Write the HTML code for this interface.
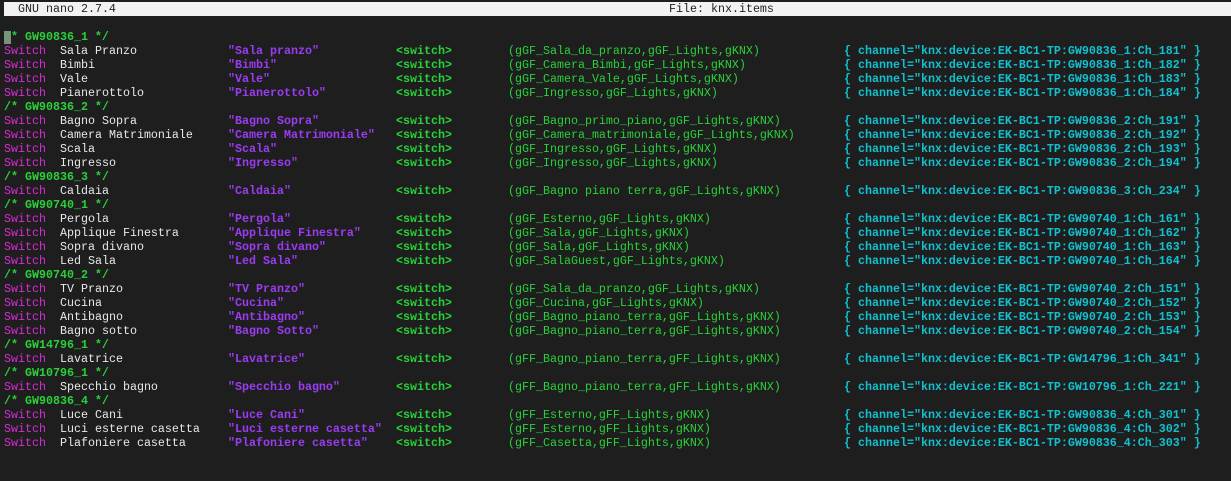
<!DOCTYPE html>
<html><head><meta charset="utf-8"><style>
html,body{margin:0;padding:0;background:#1e1e1e;width:1231px;height:481px;overflow:hidden}
body{font-family:"Liberation Mono","DejaVu Sans Mono",monospace;font-size:11.67px;position:relative}
.hdr{position:absolute;left:4px;top:2px;width:1227px;height:14px;background:#f2f2f2;color:#222}
.hdr span{position:absolute;top:0;line-height:14px;white-space:pre}
.l{position:absolute;left:0;height:14px;line-height:14px;width:1231px;white-space:pre}
.l span{position:absolute;top:0}
.c{color:#2ad13a;font-weight:bold;left:4px}
.s{color:#d92bd6;left:4px}
.n{color:#e8e8e8;left:60px}
.q{color:#9b3cf2;font-weight:bold;left:228px}
.w{color:#2ad13a;font-weight:bold;left:396px}
.g{color:#2ad13a;left:508px}
.h{color:#12c0d0;font-weight:bold;left:844px}
.cur{position:absolute;left:4px;top:31px;width:7px;height:13px;background:#888}
</style></head><body>
<div class="hdr"><span style="left:14px">GNU nano 2.7.4</span><span style="left:665px">File: knx.items</span></div>
<div class="cur"></div>
<div class="l" style="top:30px"><span class="c">/* GW90836_1 */</span></div>
<div class="l" style="top:44px"><span class="s">Switch</span><span class="n">Sala Pranzo</span><span class="q">"Sala pranzo"</span><span class="w">&lt;switch&gt;</span><span class="g">(gGF_Sala_da_pranzo,gGF_Lights,gKNX)</span><span class="h">{ channel="knx:device:EK-BC1-TP:GW90836_1:Ch_181" }</span></div>
<div class="l" style="top:58px"><span class="s">Switch</span><span class="n">Bimbi</span><span class="q">"Bimbi"</span><span class="w">&lt;switch&gt;</span><span class="g">(gGF_Camera_Bimbi,gGF_Lights,gKNX)</span><span class="h">{ channel="knx:device:EK-BC1-TP:GW90836_1:Ch_182" }</span></div>
<div class="l" style="top:72px"><span class="s">Switch</span><span class="n">Vale</span><span class="q">"Vale"</span><span class="w">&lt;switch&gt;</span><span class="g">(gGF_Camera_Vale,gGF_Lights,gKNX)</span><span class="h">{ channel="knx:device:EK-BC1-TP:GW90836_1:Ch_183" }</span></div>
<div class="l" style="top:86px"><span class="s">Switch</span><span class="n">Pianerottolo</span><span class="q">"Pianerottolo"</span><span class="w">&lt;switch&gt;</span><span class="g">(gGF_Ingresso,gGF_Lights,gKNX)</span><span class="h">{ channel="knx:device:EK-BC1-TP:GW90836_1:Ch_184" }</span></div>
<div class="l" style="top:100px"><span class="c">/* GW90836_2 */</span></div>
<div class="l" style="top:114px"><span class="s">Switch</span><span class="n">Bagno Sopra</span><span class="q">"Bagno Sopra"</span><span class="w">&lt;switch&gt;</span><span class="g">(gGF_Bagno_primo_piano,gGF_Lights,gKNX)</span><span class="h">{ channel="knx:device:EK-BC1-TP:GW90836_2:Ch_191" }</span></div>
<div class="l" style="top:128px"><span class="s">Switch</span><span class="n">Camera Matrimoniale</span><span class="q">"Camera Matrimoniale"</span><span class="w">&lt;switch&gt;</span><span class="g">(gGF_Camera_matrimoniale,gGF_Lights,gKNX)</span><span class="h">{ channel="knx:device:EK-BC1-TP:GW90836_2:Ch_192" }</span></div>
<div class="l" style="top:142px"><span class="s">Switch</span><span class="n">Scala</span><span class="q">"Scala"</span><span class="w">&lt;switch&gt;</span><span class="g">(gGF_Ingresso,gGF_Lights,gKNX)</span><span class="h">{ channel="knx:device:EK-BC1-TP:GW90836_2:Ch_193" }</span></div>
<div class="l" style="top:156px"><span class="s">Switch</span><span class="n">Ingresso</span><span class="q">"Ingresso"</span><span class="w">&lt;switch&gt;</span><span class="g">(gGF_Ingresso,gGF_Lights,gKNX)</span><span class="h">{ channel="knx:device:EK-BC1-TP:GW90836_2:Ch_194" }</span></div>
<div class="l" style="top:170px"><span class="c">/* GW90836_3 */</span></div>
<div class="l" style="top:184px"><span class="s">Switch</span><span class="n">Caldaia</span><span class="q">"Caldaia"</span><span class="w">&lt;switch&gt;</span><span class="g">(gGF_Bagno piano terra,gGF_Lights,gKNX)</span><span class="h">{ channel="knx:device:EK-BC1-TP:GW90836_3:Ch_234" }</span></div>
<div class="l" style="top:198px"><span class="c">/* GW90740_1 */</span></div>
<div class="l" style="top:212px"><span class="s">Switch</span><span class="n">Pergola</span><span class="q">"Pergola"</span><span class="w">&lt;switch&gt;</span><span class="g">(gGF_Esterno,gGF_Lights,gKNX)</span><span class="h">{ channel="knx:device:EK-BC1-TP:GW90740_1:Ch_161" }</span></div>
<div class="l" style="top:226px"><span class="s">Switch</span><span class="n">Applique Finestra</span><span class="q">"Applique Finestra"</span><span class="w">&lt;switch&gt;</span><span class="g">(gGF_Sala,gGF_Lights,gKNX)</span><span class="h">{ channel="knx:device:EK-BC1-TP:GW90740_1:Ch_162" }</span></div>
<div class="l" style="top:240px"><span class="s">Switch</span><span class="n">Sopra divano</span><span class="q">"Sopra divano"</span><span class="w">&lt;switch&gt;</span><span class="g">(gGF_Sala,gGF_Lights,gKNX)</span><span class="h">{ channel="knx:device:EK-BC1-TP:GW90740_1:Ch_163" }</span></div>
<div class="l" style="top:254px"><span class="s">Switch</span><span class="n">Led Sala</span><span class="q">"Led Sala"</span><span class="w">&lt;switch&gt;</span><span class="g">(gGF_SalaGuest,gGF_Lights,gKNX)</span><span class="h">{ channel="knx:device:EK-BC1-TP:GW90740_1:Ch_164" }</span></div>
<div class="l" style="top:268px"><span class="c">/* GW90740_2 */</span></div>
<div class="l" style="top:282px"><span class="s">Switch</span><span class="n">TV Pranzo</span><span class="q">"TV Pranzo"</span><span class="w">&lt;switch&gt;</span><span class="g">(gGF_Sala_da_pranzo,gGF_Lights,gKNX)</span><span class="h">{ channel="knx:device:EK-BC1-TP:GW90740_2:Ch_151" }</span></div>
<div class="l" style="top:296px"><span class="s">Switch</span><span class="n">Cucina</span><span class="q">"Cucina"</span><span class="w">&lt;switch&gt;</span><span class="g">(gGF_Cucina,gGF_Lights,gKNX)</span><span class="h">{ channel="knx:device:EK-BC1-TP:GW90740_2:Ch_152" }</span></div>
<div class="l" style="top:310px"><span class="s">Switch</span><span class="n">Antibagno</span><span class="q">"Antibagno"</span><span class="w">&lt;switch&gt;</span><span class="g">(gGF_Bagno_piano_terra,gGF_Lights,gKNX)</span><span class="h">{ channel="knx:device:EK-BC1-TP:GW90740_2:Ch_153" }</span></div>
<div class="l" style="top:324px"><span class="s">Switch</span><span class="n">Bagno sotto</span><span class="q">"Bagno Sotto"</span><span class="w">&lt;switch&gt;</span><span class="g">(gGF_Bagno_piano_terra,gGF_Lights,gKNX)</span><span class="h">{ channel="knx:device:EK-BC1-TP:GW90740_2:Ch_154" }</span></div>
<div class="l" style="top:338px"><span class="c">/* GW14796_1 */</span></div>
<div class="l" style="top:352px"><span class="s">Switch</span><span class="n">Lavatrice</span><span class="q">"Lavatrice"</span><span class="w">&lt;switch&gt;</span><span class="g">(gFF_Bagno_piano_terra,gFF_Lights,gKNX)</span><span class="h">{ channel="knx:device:EK-BC1-TP:GW14796_1:Ch_341" }</span></div>
<div class="l" style="top:366px"><span class="c">/* GW10796_1 */</span></div>
<div class="l" style="top:380px"><span class="s">Switch</span><span class="n">Specchio bagno</span><span class="q">"Specchio bagno"</span><span class="w">&lt;switch&gt;</span><span class="g">(gFF_Bagno_piano_terra,gFF_Lights,gKNX)</span><span class="h">{ channel="knx:device:EK-BC1-TP:GW10796_1:Ch_221" }</span></div>
<div class="l" style="top:394px"><span class="c">/* GW90836_4 */</span></div>
<div class="l" style="top:408px"><span class="s">Switch</span><span class="n">Luce Cani</span><span class="q">"Luce Cani"</span><span class="w">&lt;switch&gt;</span><span class="g">(gFF_Esterno,gFF_Lights,gKNX)</span><span class="h">{ channel="knx:device:EK-BC1-TP:GW90836_4:Ch_301" }</span></div>
<div class="l" style="top:422px"><span class="s">Switch</span><span class="n">Luci esterne casetta</span><span class="q">"Luci esterne casetta"</span><span class="w">&lt;switch&gt;</span><span class="g">(gFF_Esterno,gFF_Lights,gKNX)</span><span class="h">{ channel="knx:device:EK-BC1-TP:GW90836_4:Ch_302" }</span></div>
<div class="l" style="top:436px"><span class="s">Switch</span><span class="n">Plafoniere casetta</span><span class="q">"Plafoniere casetta"</span><span class="w">&lt;switch&gt;</span><span class="g">(gFF_Casetta,gFF_Lights,gKNX)</span><span class="h">{ channel="knx:device:EK-BC1-TP:GW90836_4:Ch_303" }</span></div>
</body></html>
